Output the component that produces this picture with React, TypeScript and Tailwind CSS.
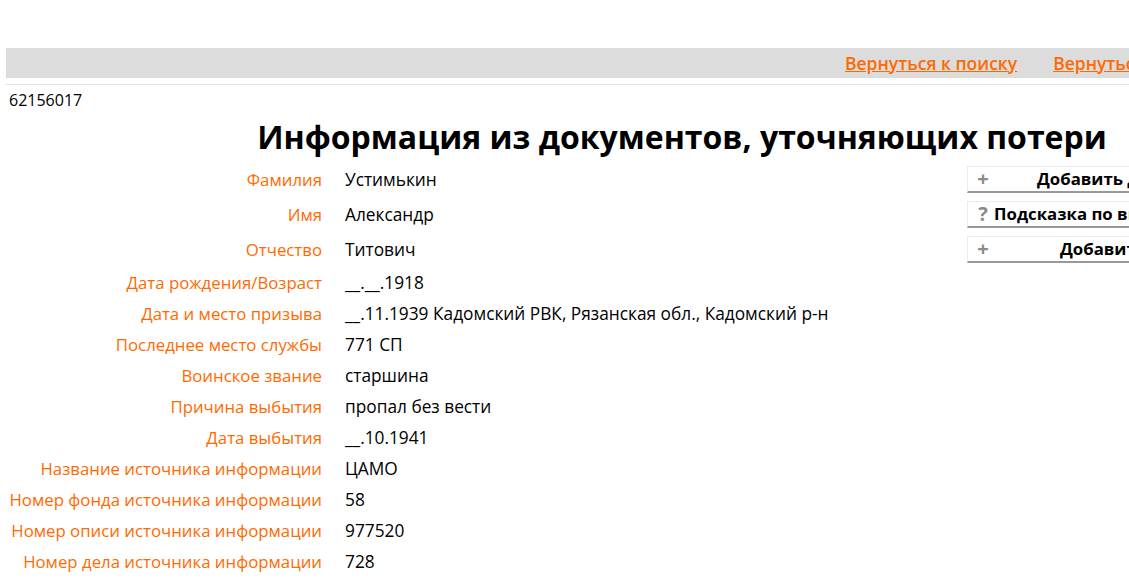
import React from "react";

const rows: [string, string][] = [
  ["Фамилия", "Устимькин"],
  ["Имя", "Александр"],
  ["Отчество", "Титович"],
  ["Дата рождения/Возраст", "__.__.1918"],
  ["Дата и место призыва", "__.11.1939 Кадомский РВК, Рязанская обл., Кадомский р-н"],
  ["Последнее место службы", "771 СП"],
  ["Воинское звание", "старшина"],
  ["Причина выбытия", "пропал без вести"],
  ["Дата выбытия", "__.10.1941"],
  ["Название источника информации", "ЦАМО"],
  ["Номер фонда источника информации", "58"],
  ["Номер описи источника информации", "977520"],
  ["Номер дела источника информации", "728"],
];

const buttons: { icon: string; text: string; ml: string }[] = [
  { icon: "+", text: "Добавить данные", ml: "ml-[47px]" },
  { icon: "?", text: "Подсказка по вводу данных", ml: "ml-[4px]" },
  { icon: "+", text: "Добавить фото", ml: "ml-[70px]" },
];

export default function App() {
  return (
    <div className="w-[1129px] h-[578px] overflow-hidden bg-white" style={{ fontFamily: "'Open Sans', 'DejaVu Sans', sans-serif" }}>
      <div className="w-[1364px] pl-[6px] pt-[48px]">
        <div className="h-[30px] bg-[#dcdcdc] flex items-center gap-[36px] pl-[839px]">
          <a className="text-[#ff6a00] underline text-[17.5px] font-semibold whitespace-nowrap">Вернуться к поиску</a>
          <a className="text-[#ff6a00] underline text-[17.5px] font-semibold whitespace-nowrap">Вернуться к результатам</a>
        </div>
        <div className="mt-[6px] h-[1px] bg-[#e2e2e2]" />
        <div className="pl-[3px] pt-[5px] text-[16px] leading-[20px] text-black">62156017</div>
        <h1 className="text-center font-bold text-[32px] leading-[40px] mt-[7px] text-black -ml-[6px]">
          Информация из документов, уточняющих потери
        </h1>
        <div className="flex -ml-[6px] mt-[5px]">
          <div className="w-[967px] shrink-0">
            {rows.map(([k, v], i) => (
              <div key={k} className={`flex items-center ${i < 3 ? "h-[35px]" : "h-[31px]"}`}>
                <div className="w-[322px] text-right text-[#ff6a00] text-[16.8px] whitespace-nowrap">{k}</div>
                <div className="pl-[23px] text-[17.3px] text-black whitespace-nowrap">{v}</div>
              </div>
            ))}
          </div>
          <div className="flex flex-col gap-[8px] mt-[4px]">
            {buttons.map((b) => (
              <div key={b.text} className="w-[300px] h-[27px] border-t border-l border-[#ececec] border-b-2 border-b-[#999] flex items-center pl-[8px]">
                <span className="w-[14px] text-center text-[#8a8a8a] font-bold text-[20px] leading-[20px]">{b.icon}</span>
                <span className={`${b.ml} font-bold text-[16.8px] text-black whitespace-nowrap`}>{b.text}</span>
              </div>
            ))}
          </div>
        </div>
      </div>
    </div>
  );
}
